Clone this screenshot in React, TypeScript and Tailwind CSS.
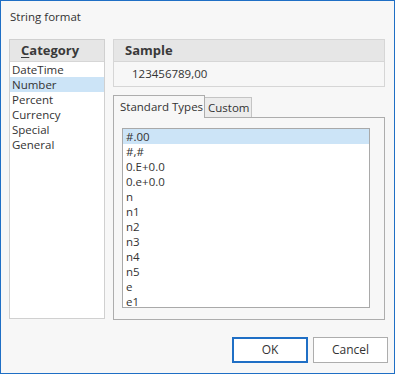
import React from "react";

const categories = ["DateTime", "Number", "Percent", "Currency", "Special", "General"];
const formats = ["#.00", "#,#", "0.E+0.0", "0.e+0.0", "n", "n1", "n2", "n3", "n4", "n5", "e", "e1"];

export default function App() {
  return (
    <div
      className="flex h-[374px] w-[395px] flex-col border border-[#1f6fc5] bg-[#f7f7f7] text-[11.5px] text-[#333]"
      style={{ fontFamily: '"Open Sans", "Noto Sans", sans-serif' }}
    >
      <div className="h-[38px] pl-[9px] pt-[7px]">String format</div>

      <div className="ml-[8px] flex h-[281px] gap-[8px]">
        {/* Category list */}
        <div className="flex h-[280px] w-[96px] flex-col border border-[#d0d0d0] bg-white">
          <div className="flex h-[22px] items-center border-b border-[#d6d6d6] bg-[#e6e6e6] pl-[11px] text-[13px] font-bold text-[#3a3a3a]">
            <span>
              <span className="underline underline-offset-2">C</span>ategory
            </span>
          </div>
          <div className="flex flex-col">
            {categories.map((c) => (
              <div
                key={c}
                className={`flex h-[15px] items-center pl-[2px] ${c === "Number" ? "bg-[#cce4f7]" : ""}`}
              >
                {c}
              </div>
            ))}
          </div>
        </div>

        {/* Right side */}
        <div className="flex w-[272px] flex-col">
          <div className="flex h-[48px] flex-col border border-[#d6d6d6]">
            <div className="flex h-[22px] items-center border-b border-[#d6d6d6] bg-[#e6e6e6] pl-[11px] text-[13px] font-bold text-[#3a3a3a]">
              Sample
            </div>
            <div className="flex flex-1 items-center pl-[18px]">123456789,00</div>
          </div>

          <div className="mt-[8px] flex h-[22px] items-end">
            <div className="relative z-10 -mb-px flex h-[23px] w-[92px] items-center border border-b-0 border-[#adadad] bg-[#f7f7f7] pl-[6px]">
              Standard Types
            </div>
            <div className="flex h-[20px] w-[47px] items-center border border-l-0 border-b-0 border-[#c4c4c4] bg-[#ececec] pl-[3px]">
              Custom
            </div>
          </div>

          <div className="flex h-[203px] flex-col border border-[#adadad] pl-[8px] pt-[10px]">
            <div className="flex h-[180px] w-[248px] flex-col overflow-hidden border border-[#a9a9a9] bg-white">
              {formats.map((f, i) => (
                <div
                  key={f}
                  className={`flex h-[15px] shrink-0 items-center pl-[3px] ${i === 0 ? "bg-[#cce4f7]" : ""}`}
                >
                  {f}
                </div>
              ))}
            </div>
          </div>
        </div>
      </div>

      <div className="mr-[6px] mt-[17px] flex justify-end gap-[5px]">
        <button className="h-[26px] w-[76px] border-2 border-[#1f6fc5] bg-white text-[12px] text-[#333]">OK</button>
        <button className="h-[26px] w-[75px] border border-[#adadad] bg-white text-[12px] text-[#333]">Cancel</button>
      </div>
    </div>
  );
}
